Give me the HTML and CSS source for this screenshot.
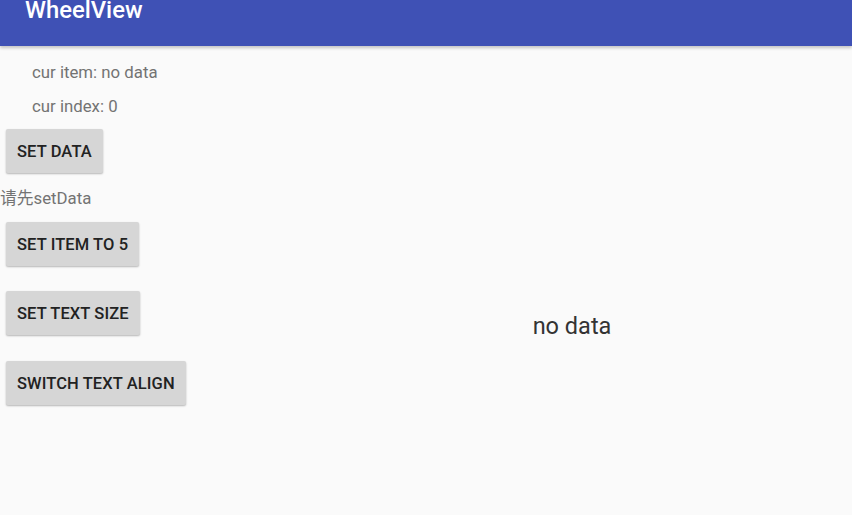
FILE: index.html
```html
<!DOCTYPE html>
<html lang="zh">
<head>
<meta charset="utf-8">
<title>WheelView</title>
<link rel="stylesheet" href="styles.css">
</head>
<body>
<header class="appbar">
  <div class="title">WheelView</div>
</header>
<main class="content">
  <section class="controls">
    <div class="info">cur item: no data</div>
    <div class="info">cur index: 0</div>
    <button class="btn btn-first">SET DATA</button>
    <div class="hint">请先setData</div>
    <button class="btn btn-item">SET ITEM TO 5</button>
    <button class="btn btn-size">SET TEXT SIZE</button>
    <button class="btn btn-align">SWITCH TEXT ALIGN</button>
  </section>
  <section class="wheel">
    <div class="wheel-text">no data</div>
  </section>
</main>
</body>
</html>
```
FILE: styles.css
```css
* { box-sizing: border-box; }
html, body {
  margin: 0;
  padding: 0;
  width: 852px;
  height: 515px;
  overflow: hidden;
  background: #fafafa;
  font-family: Roboto, "Noto Sans CJK SC", sans-serif;
}
.appbar {
  height: 46px;
  background: #3f51b5;
  box-shadow: 0 2px 3px rgba(0,0,0,0.22);
  position: relative;
  z-index: 1;
  padding-left: 25px;
}
.title {
  color: #fff;
  font-size: 23.8px;
  font-weight: 500;
  line-height: 21px;
}
.content {
  display: flex;
  height: 469px;
}
.controls {
  width: 292px;
  display: flex;
  flex-direction: column;
  align-items: flex-start;
  padding-top: 8px;
}
.info {
  padding-left: 32px;
  height: 34px;
  line-height: 36px;
  font-size: 16.8px;
  color: #737373;
}
.hint {
  margin-top: 13px;
  line-height: 24px;
  font-size: 16.8px;
  color: #737373;
}
.btn {
  margin-left: 6px;
  height: 44px;
  padding: 0 11px;
  border: none;
  border-radius: 2px;
  background: #d6d6d6;
  box-shadow: 0 1px 2px rgba(0,0,0,0.28);
  font-family: Roboto, sans-serif;
  font-weight: 500;
  font-size: 16.5px;
  color: #222;
  letter-spacing: 0.1px;
}
.btn-first { margin-top: 7px; }
.btn-item { margin-top: 12px; }
.btn-size { margin-top: 25px; }
.btn-align { margin-top: 26px; }
.wheel {
  flex: 1;
  display: flex;
  align-items: center;
  justify-content: center;
  padding-top: 91px;
}
.wheel-text {
  font-size: 23.5px;
  color: #333;
}
```
